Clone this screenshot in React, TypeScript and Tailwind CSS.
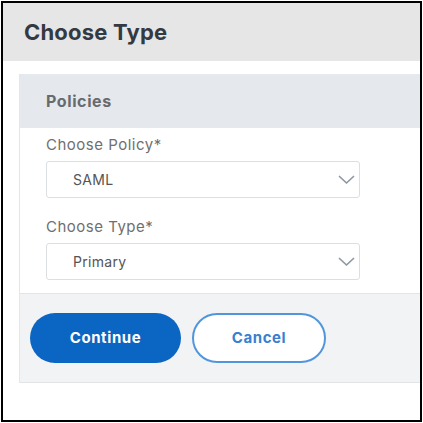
import * as React from "react"

function Chevron() {
  return (
    <svg width="17" height="10" viewBox="0 0 17 10" fill="none" className="shrink-0">
      <polyline points="1.5,1.5 8.5,8 15.5,1.5" stroke="#8e98a3" strokeWidth="1.7" strokeLinecap="round" strokeLinejoin="round" />
    </svg>
  )
}

function SelectField({ label, value }: { label: string; value: string }) {
  return (
    <div className="flex flex-col">
      <label className="text-[15px] leading-[18px] tracking-[0.5px] text-[#6f6f6f]">{label}</label>
      <div className="mt-[7px] w-[314px] h-[37px] border border-[#dcdfe2] rounded-[3px] bg-white flex items-center justify-between pl-[26px] pr-[4px]">
        <span className="text-[14px] tracking-[0.3px] text-[#555555]">{value}</span>
        <Chevron />
      </div>
    </div>
  )
}

export default function App() {
  return (
    <div className="w-[423px] h-[423px] bg-white p-px" style={{ fontFamily: "Inter, 'Liberation Sans', sans-serif" }}>
      <div className="h-full border-2 border-black overflow-hidden flex flex-col bg-white">
        {/* Page header */}
        <div className="h-[58px] shrink-0 bg-[#e6e6e6] flex items-center pl-[21px]">
          <h1 className="text-[22px] font-bold tracking-[0.2px] text-[#343a42]">Choose Type</h1>
        </div>

        {/* Policies panel */}
        <div className="mt-[13px] ml-[16px] w-[480px] shrink-0 border-l border-[#e4e6e9]">
          <div className="h-[54px] bg-[#e5e8ed] flex items-center pl-[26px]">
            <span className="text-[16px] font-bold tracking-[0.6px] text-[#666b70]">Policies</span>
          </div>
          <div className="bg-white pl-[26px] pt-[8px] pb-[13px] flex flex-col gap-[20px]">
            <SelectField label="Choose Policy*" value="SAML" />
            <SelectField label="Choose Type*" value="Primary" />
          </div>
          <div className="h-[90px] bg-[#f2f3f4] border-t border-b border-[#e2e5e8] flex items-start gap-[11px] pl-[10px] pt-[19px]">
            <button className="w-[151px] h-[50px] rounded-full bg-[#0b65c2] text-white text-[15px] font-bold tracking-[0.6px]">
              Continue
            </button>
            <button className="w-[134px] h-[50px] rounded-full bg-white border-2 border-[#5196dc] text-[#3a7fd0] text-[15px] font-bold tracking-[0.6px]">
              Cancel
            </button>
          </div>
        </div>
      </div>
    </div>
  )
}
